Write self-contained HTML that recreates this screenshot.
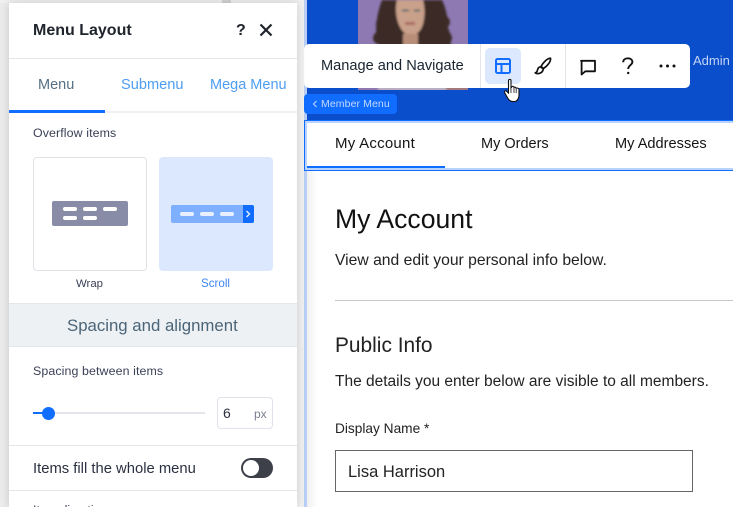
<!DOCTYPE html>
<html><head><meta charset="utf-8">
<style>
html{margin:0;padding:0;width:733px;height:507px;overflow:hidden}
body{margin:0;padding:0;width:733px;height:507px;overflow:hidden;position:relative;background:#fff;font-family:"Liberation Sans",sans-serif;color:#20303c}
.a{position:absolute;white-space:nowrap}
.panel{position:absolute;left:9px;top:3px;width:288px;height:504px;background:#fff;box-shadow:0 0 9px rgba(0,0,0,.16)}
.ln{position:absolute;height:1px;background:#e4e6ea}
</style></head><body>
<!-- canvas backdrop -->
<div class="a" style="left:297px;top:0;width:7px;height:507px;background:#f1f1f2"></div>
<div class="a" style="left:0;top:0;width:9px;height:507px;background:#ececec"></div>
<div class="a" style="left:0;top:0;width:304px;height:3px;background:#f0f0f0"></div>
<div class="a" style="left:222px;top:0;width:9px;height:3px;background:#d2d2d2"></div>
<div class="a" style="left:304px;top:0;width:3px;height:507px;background:#b9cff5"></div>
<div class="a" style="left:307px;top:0;width:426px;height:120px;background:#0b4ecb"></div>
<div class="a" style="left:307px;top:121px;width:10px;height:386px;background:linear-gradient(90deg,#f0f0f1,#fff)"></div>

<!-- photo -->
<svg class="a" style="left:358px;top:0" width="110" height="90" viewBox="0 0 110 90">
<defs><filter id="b" x="-10%" y="-10%" width="120%" height="120%"><feGaussianBlur stdDeviation="1"/></filter></defs>
<rect width="110" height="90" fill="#8f79b3"/>
<g filter="url(#b)">
<path d="M24 0C20 10 18 22 18 32C16 40 20 46 26 50H90C94 44 94 36 90 28C90 18 88 8 84 0Z" fill="#3a2c27"/>
<circle cx="24" cy="24" r="6" fill="#3a2c27"/><circle cx="21" cy="38" r="6" fill="#3a2c27"/><circle cx="86" cy="22" r="6" fill="#3a2c27"/><circle cx="88" cy="38" r="6" fill="#3a2c27"/>
<path d="M39 0C37 8 38 18 41 25C44 32 49 36 52 36C58 36 63 31 65 24C67 16 67 8 65 0Z" fill="#c9a08a"/>
<path d="M45 34H60V50H45Z" fill="#b88e78"/>
<path d="M44 10.500h7M56 10.500h6" stroke="#5a6a70" stroke-width="2"/>
<path d="M47 23.500h10" stroke="#a5605a" stroke-width="2.500"/>
<path d="M20 88H92V90H20Z" fill="#d8d3cf"/>
<path d="M88 88H110V90H88Z" fill="#b07a58"/>
</g>
</svg>
<div class="a" style="left:693px;top:53px;font-size:13px;color:#c3d4f5">Admin</div>

<!-- toolbar -->
<div class="a" style="left:304px;top:44px;width:386px;height:44px;background:#fff;border-radius:5px"></div>
<div class="a" style="left:321px;top:58px;font-size:14.600px;line-height:17px;color:#1a2530">Manage and Navigate</div>
<div class="a" style="left:480px;top:44px;width:1px;height:44px;background:#e5e5e5"></div>
<div class="a" style="left:565px;top:44px;width:1px;height:44px;background:#e5e5e5"></div>
<div class="a" style="left:485px;top:48px;width:36px;height:36px;background:#dbe8fd;border-radius:5px"></div>
<svg class="a" style="left:495px;top:58px" width="16" height="16" viewBox="0 0 16 16" fill="none" stroke="#116dff" stroke-width="2"><rect x="1" y="1" width="14" height="14" rx="1.500"/><path d="M1 6H15M6.500 6V15"/></svg>
<svg class="a" style="left:533px;top:56px" width="20" height="20" viewBox="0 0 20 20" fill="none" stroke="#111" stroke-width="1.700" stroke-linejoin="round"><path d="M8 10.500C10 6.500 14 2.500 17.500 2.200C18 5.500 14.500 10 10.500 12.500Z"/><path d="M7.500 10.800C4.800 11 4.600 13.500 4.200 15C3.800 16.200 2.800 16.700 2.200 16.800C4 18.200 9.500 18 10.300 13Z"/></svg>
<svg class="a" style="left:579px;top:59px" width="18" height="17" viewBox="0 0 18 17" fill="none" stroke="#111" stroke-width="1.800"><path d="M2 1.800H16V12.300H6.300L2.600 15.500V1.800Z" stroke-linejoin="round"/></svg>
<svg class="a" style="left:621px;top:57px" width="14" height="18" viewBox="0 0 14 18" fill="none" stroke="#111" stroke-width="1.900"><path d="M2.200 5.200C2.200 2.800 4.200 1.300 6.800 1.300C9.500 1.300 11.400 2.800 11.400 5C11.400 8 7.200 8.200 7.200 12"/><circle cx="7.200" cy="16" r="1.200" fill="#111" stroke="none"/></svg>
<svg class="a" style="left:659px;top:63px" width="18" height="6"><circle cx="2" cy="3" r="1.500" fill="#111"/><circle cx="8.500" cy="3" r="1.500" fill="#111"/><circle cx="15" cy="3" r="1.500" fill="#111"/></svg>
<!-- cursor -->
<svg class="a" style="left:502px;top:78px" width="22" height="26" viewBox="0 0 22 26"><path d="M6.500 2.500C6.500 1 9 1 9 2.500V10L10 8.500C11 8 12 8.500 12 9.500C13 8.800 14 9.300 14.200 10.300C15.200 9.800 17 10.300 17 11.500V17C17 20 15.500 23 13 23.500C9.500 24 7.500 23 6 20.500L2.500 14.500C2 13 3.500 12.300 4.500 13.200L6.500 15Z" fill="#fff" stroke="#111" stroke-width="1.100"/><path d="M9 11V15M12 10V15M14.200 11V15" stroke="#111" stroke-width=".8"/></svg>

<!-- member menu label -->
<div class="a" style="left:304px;top:94px;width:93px;height:20px;background:#116dff;border-radius:4px"></div>
<svg class="a" style="left:312px;top:100px" width="6" height="8" fill="none" stroke="#c3d8ff" stroke-width="1"><path d="M4.500 1L1.500 4L4.500 7"/></svg>
<div class="a" style="left:321px;top:97px;font-size:10.500px;line-height:14px;letter-spacing:.1px;color:#c3d8ff">Member Menu</div>

<!-- nav bar -->
<div class="a" style="left:304px;top:120px;width:429px;height:51px;background:#b9d3fb;border:1px solid #116dff;border-right:0;box-sizing:border-box"></div>
<div class="a" style="left:307px;top:123px;width:426px;height:45px;background:#fff"></div>
<div class="a" style="left:307px;top:166px;width:138px;height:2px;background:#116dff"></div>
<div class="a" style="left:335px;top:135px;font-size:15px;line-height:18px;letter-spacing:.25px;color:#151515">My Account</div>
<div class="a" style="left:481px;top:135px;font-size:14.500px;line-height:18px;color:#151515">My Orders</div>
<div class="a" style="left:615px;top:135px;font-size:14.600px;line-height:18px;color:#151515">My Addresses</div>

<!-- page content -->
<div class="a" style="left:335px;top:204px;font-size:26.600px;line-height:30px;color:#111">My Account</div>
<div class="a" style="left:335px;top:252px;font-size:15.700px;line-height:18px;color:#222">View and edit your personal info below.</div>
<div class="a" style="left:335px;top:300px;width:398px;height:1px;background:#c8c8c8"></div>
<div class="a" style="left:335px;top:333px;font-size:20.900px;line-height:25px;color:#222">Public Info</div>
<div class="a" style="left:335px;top:373px;font-size:15.500px;line-height:18px;color:#222">The details you enter below are visible to all members.</div>
<div class="a" style="left:335px;top:421px;font-size:13.700px;line-height:16px;color:#222">Display Name *</div>
<div class="a" style="left:335px;top:450px;width:358px;height:42px;border:1px solid #666;box-sizing:border-box"></div>
<div class="a" style="left:348px;top:463px;font-size:16.500px;line-height:19px;color:#222">Lisa Harrison</div>

<!-- panel -->
<div class="panel"></div>
<div class="a" style="left:33px;top:21px;font-size:16px;line-height:20px;font-weight:700;color:#20242c">Menu Layout</div>
<div class="a" style="left:236px;top:21px;font-size:16px;line-height:20px;font-weight:700;color:#20242c">?</div>
<svg class="a" style="left:259px;top:23px" width="14" height="14" fill="none" stroke="#20242c" stroke-width="2.200"><path d="M1.500 1.500L12.500 12.500M12.500 1.500L1.500 12.500"/></svg>
<div class="ln" style="left:9px;top:58px;width:288px"></div>
<div class="a" style="left:38px;top:77px;font-size:14.500px;line-height:17px;color:#577083">Menu</div>
<div class="a" style="left:121px;top:77px;font-size:14.600px;line-height:17px;color:#4d9df0">Submenu</div>
<div class="a" style="left:210px;top:77px;font-size:14.500px;line-height:17px;color:#4d9df0">Mega Menu</div>
<div class="a" style="left:9px;top:111px;width:288px;height:2px;background:#f0f1f3"></div>
<div class="a" style="left:9px;top:110px;width:96px;height:3px;background:#116dff"></div>
<div class="a" style="left:33px;top:126px;font-size:12.400px;line-height:15px;letter-spacing:.1px;color:#3b4057">Overflow items</div>

<div class="a" style="left:33px;top:157px;width:114px;height:114px;box-sizing:border-box;border:1px solid #e0e2e8;border-radius:4px;background:#fff"></div>
<div class="a" style="left:52px;top:201px;width:76px;height:25px;background:#888ca6;border-radius:2px"></div>
<div class="a" style="left:63px;top:207px;width:14px;height:4px;background:#fff;border-radius:2px"></div>
<div class="a" style="left:83px;top:207px;width:14px;height:4px;background:#fff;border-radius:2px"></div>
<div class="a" style="left:103px;top:207px;width:14px;height:4px;background:#fff;border-radius:2px"></div>
<div class="a" style="left:63px;top:216px;width:14px;height:4px;background:#fff;border-radius:2px"></div>
<div class="a" style="left:83px;top:216px;width:14px;height:4px;background:#fff;border-radius:2px"></div>
<div class="a" style="left:76px;top:277px;font-size:11.400px;line-height:14px;color:#3b4057">Wrap</div>

<div class="a" style="left:159px;top:157px;width:114px;height:114px;background:#dbe8fd;border-radius:4px"></div>
<div class="a" style="left:171px;top:205px;width:83px;height:18px;background:#7fb0ff;border-radius:2px"></div>
<div class="a" style="left:243px;top:205px;width:11px;height:18px;background:#116dff;border-radius:0 2px 2px 0"></div>
<svg class="a" style="left:245px;top:210px" width="7" height="8" fill="none" stroke="#dbe8fd" stroke-width="1.500"><path d="M1.500 1L4.500 4L1.500 7"/></svg>
<div class="a" style="left:180px;top:212px;width:14px;height:4px;background:#e8f0ff;border-radius:2px"></div>
<div class="a" style="left:200px;top:212px;width:14px;height:4px;background:#e8f0ff;border-radius:2px"></div>
<div class="a" style="left:220px;top:212px;width:14px;height:4px;background:#e8f0ff;border-radius:2px"></div>
<div class="a" style="left:201px;top:277px;font-size:11.600px;line-height:14px;color:#3f86f5">Scroll</div>

<div class="a" style="left:9px;top:303px;width:288px;height:44px;box-sizing:border-box;background:#eef1f4;border-top:1px solid #e4e6ea;border-bottom:1px solid #e4e6ea"></div>
<div class="a" style="left:67px;top:316px;font-size:16.800px;line-height:20px;color:#4a6578">Spacing and alignment</div>

<div class="a" style="left:33px;top:364px;font-size:12.400px;line-height:15px;letter-spacing:.1px;color:#3b4057">Spacing between items</div>
<div class="a" style="left:33px;top:412px;width:172px;height:2px;background:#e4e5ec"></div>
<div class="a" style="left:33px;top:412px;width:15px;height:2px;background:#116dff"></div>
<div class="a" style="left:42px;top:407px;width:13px;height:13px;background:#116dff;border-radius:50%"></div>
<div class="a" style="left:217px;top:397px;width:56px;height:32px;box-sizing:border-box;border:1px solid #e0e2ea;border-radius:4px;background:#fff"></div>
<div class="a" style="left:223px;top:405px;font-size:14px;line-height:17px;color:#2b3040">6</div>
<div class="a" style="left:254px;top:407px;font-size:12px;line-height:14px;color:#7a7f90">px</div>
<div class="ln" style="left:9px;top:445px;width:288px"></div>
<div class="a" style="left:33px;top:461px;font-size:14.800px;line-height:17px;color:#2b3040">Items fill the whole menu</div>
<div class="a" style="left:241px;top:458px;width:32px;height:20px;background:#3d4048;border-radius:10px"></div>
<div class="a" style="left:243px;top:460px;width:16px;height:16px;background:#fff;border-radius:50%"></div>
<div class="ln" style="left:9px;top:490px;width:288px"></div>
<div class="a" style="left:33px;top:503px;font-size:12.400px;line-height:15px;color:#3b4057">Item direction</div>
</body></html>
